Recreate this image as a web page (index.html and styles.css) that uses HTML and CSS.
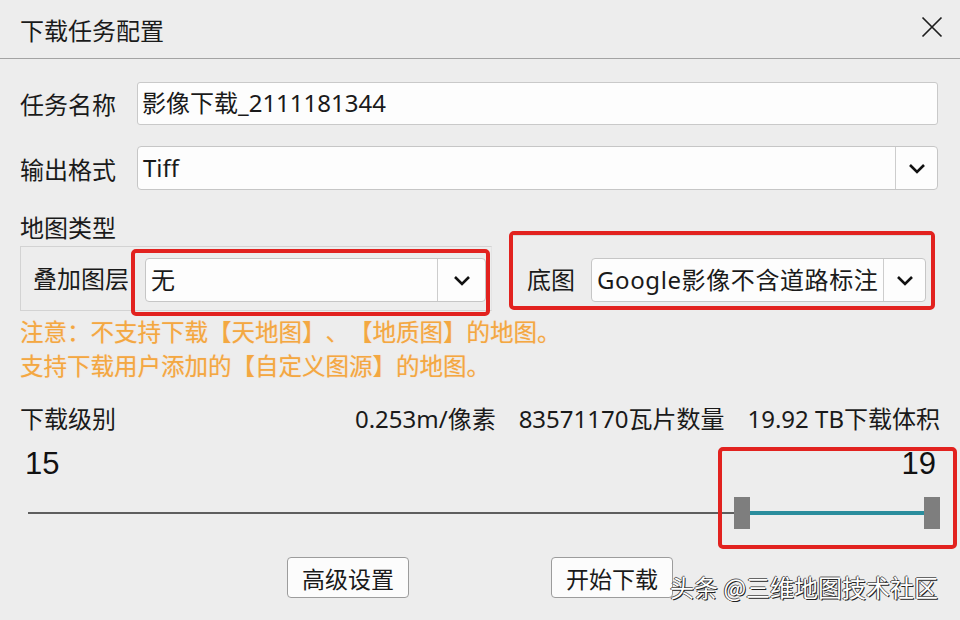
FILE: index.html
```html
<!DOCTYPE html>
<html lang="zh">
<head>
    <meta charset="UTF-8">
    <title>下载任务配置</title>
    <link rel="stylesheet" href="styles.css">
</head>
<body>
<div class="dialog">
    <div class="titlebar">
        <span class="title">下载任务配置</span>
        <svg class="close" width="22" height="22" viewBox="0 0 22 22">
            <path d="M1.5 1.5 L20.5 20.5 M20.5 1.5 L1.5 20.5" stroke="#1e1e1e" stroke-width="1.7" fill="none"/>
        </svg>
    </div>

    <div class="content">
        <div class="field">
            <label class="field-label">任务名称</label>
            <div class="input">影像下载_2111181344</div>
        </div>

        <div class="field field-format">
            <label class="field-label">输出格式</label>
            <div class="combo">
                <span class="combo-text">Tiff</span>
                <span class="combo-btn">
                    <svg width="18" height="11" viewBox="0 0 18 11"><polyline points="2,2 9,9 16,2" fill="none" stroke="#111" stroke-width="2.6"/></svg>
                </span>
            </div>
        </div>

        <div class="section-label">地图类型</div>
        <div class="map-row">
            <div class="group">
                <span class="group-label">叠加图层</span>
                <div class="mark mark-layer">
                    <div class="combo">
                        <span class="combo-text">无</span>
                        <span class="combo-btn">
                            <svg width="18" height="11" viewBox="0 0 18 11"><polyline points="2,2 9,9 16,2" fill="none" stroke="#111" stroke-width="2.6"/></svg>
                        </span>
                    </div>
                </div>
            </div>
            <div class="mark mark-base">
                <div class="group-inner">
                    <span class="group-label base-label">底图</span>
                    <div class="combo">
                        <span class="combo-text">Google影像不含道路标注</span>
                        <span class="combo-btn">
                            <svg width="18" height="11" viewBox="0 0 18 11"><polyline points="2,2 9,9 16,2" fill="none" stroke="#111" stroke-width="2.6"/></svg>
                        </span>
                    </div>
                </div>
            </div>
        </div>

        <div class="notes">
            <p>注意：不支持下载【天地图】、【地质图】的地图。</p>
            <p>支持下载用户添加的【自定义图源】的地图。</p>
        </div>

        <div class="level-head">
            <span>下载级别</span>
            <span class="stats">
                <span>0.253m/像素</span>
                <span>83571170瓦片数量</span>
                <span>19.92 TB下载体积</span>
            </span>
        </div>
        <div class="level-values">
            <span>15</span>
            <span>19</span>
        </div>
        <div class="slider">
            <div class="track"></div>
            <div class="range"></div>
            <div class="handle handle-low"></div>
            <div class="handle handle-high"></div>
        </div>

        <div class="actions">
            <button class="button">高级设置</button>
            <button class="button">开始下载</button>
        </div>
    </div>

    <div class="mark mark-range"></div>
    <div class="watermark">头条 @三维地图技术社区</div>
</div>
</body>
</html>
```

FILE: styles.css
```css
body {
    margin: 0;
    background-color: #ededed;
    color: #1a1a1a;
    font-family: "Noto Sans", "Noto Sans CJK SC", sans-serif;
}
.dialog {
    position: relative;
    width: 960px;
    height: 620px;
    overflow: hidden;
    background-color: #ededed;
}
.titlebar {
    height: 58px;
    border-bottom: 1px solid #a3a3a3;
    display: flex;
    align-items: center;
    justify-content: space-between;
    padding: 0 17px 0 20px;
}
.title {
    font-size: 24px;
}
.close {
    margin-top: -4px;
}

.content {
    padding: 0 22px 0 20px;
}
.field {
    display: flex;
    align-items: center;
    margin-top: 23px;
}
.field-format {
    margin-top: 21px;
}
.field-label {
    width: 117px;
    flex-shrink: 0;
    font-size: 24px;
}
.input {
    flex: 1;
    height: 43px;
    box-sizing: border-box;
    background-color: #fdfdfd;
    border: 1px solid #c9c9c9;
    border-radius: 3px;
    padding-left: 4px;
    font-size: 24px;
    line-height: 40px;
}
.combo {
    flex: 1;
    display: flex;
    height: 44px;
    box-sizing: border-box;
    background-color: #fdfdfd;
    border: 1px solid #c6c6c6;
    border-radius: 4px;
}
.combo-text {
    flex: 1;
    padding-left: 5px;
    font-size: 24px;
    line-height: 41px;
    white-space: nowrap;
    overflow: hidden;
}
.combo-btn {
    width: 41px;
    border-left: 1px solid #cdcdcd;
    display: flex;
    align-items: center;
    justify-content: center;
}

.section-label {
    margin-top: 25px;
    margin-bottom: -10px;
    font-size: 24px;
    line-height: 26px;
}
.map-row {
    display: flex;
    align-items: flex-start;
    height: 80px;
}
.group {
    width: 472px;
    height: 65px;
    margin-top: 15px;
    box-sizing: border-box;
    border: 1px solid #d3d3d3;
    border-right-color: #e4e4e4;
    display: flex;
    align-items: flex-start;
    padding-left: 12px;
}
.group-label {
    width: 98px;
    flex-shrink: 0;
    font-size: 24px;
    line-height: 64px;
}
.mark {
    border: 4px solid #e2221f;
    border-radius: 5px;
    box-sizing: border-box;
}
.mark-layer {
    width: 359px;
    height: 67px;
    margin-top: 2px;
    padding: 5px 0 0 10px;
    display: flex;
    align-items: flex-start;
}
.mark-layer .combo-btn {
    width: 47px;
}
.mark-base {
    width: 426px;
    height: 79px;
    margin-left: 17px;
}
.group-inner {
    height: 100%;
    box-sizing: border-box;
    border-top: 1px solid #d9d9d9;
    padding: 22px 5px 0 14px;
    display: flex;
    align-items: flex-start;
}
.base-label {
    width: 64px;
    line-height: 44px;
}
.mark-base .combo-text {
    letter-spacing: 0.6px;
}

.notes {
    margin-top: 4px;
}
.notes p {
    margin: 0;
    font-size: 23.5px;
    line-height: 34px;
    color: #f3a841;
    text-shadow: 0 0 1px #f7c9a8;
    text-spacing-trim: space-all;
}

.level-head {
    margin-top: 23px;
    display: flex;
    justify-content: space-between;
    font-size: 24px;
    line-height: 26px;
}
.stats {
    display: flex;
    gap: 23px;
    margin-right: -2px;
}
.level-values {
    margin-top: 14px;
    display: flex;
    justify-content: space-between;
    padding: 0 2px 0 5px;
    font-family: "Liberation Sans", Arial, sans-serif;
    font-size: 31px;
    line-height: 36px;
    color: #111;
}
.slider {
    position: relative;
    height: 32px;
    margin: 15px -2px 0 8px;
}
.track {
    position: absolute;
    left: 0;
    right: 0;
    top: 15px;
    height: 2px;
    background-color: #5e5e5e;
}
.range {
    position: absolute;
    left: 714px;
    right: 8px;
    top: 14px;
    height: 4px;
    background-color: #2a8d9d;
}
.handle {
    position: absolute;
    top: 0;
    width: 16px;
    height: 32px;
    background-color: #7e7e7e;
}
.handle-low {
    left: 706px;
}
.handle-high {
    right: 0;
}

.actions {
    margin-top: 28px;
    display: flex;
    gap: 142px;
    padding-left: 267px;
}
.button {
    width: 122px;
    height: 41px;
    background-color: #fcfcfc;
    border: 1px solid #9c9c9c;
    border-radius: 4px;
    font-family: "Noto Sans CJK SC", sans-serif;
    font-size: 23px;
    color: #1a1a1a;
    padding: 0;
}

.mark-range {
    position: absolute;
    left: 718px;
    top: 447px;
    width: 239px;
    height: 102px;
}
.watermark {
    position: absolute;
    left: 670px;
    top: 571px;
    font-family: "Noto Sans CJK SC", sans-serif;
    font-size: 24px;
    line-height: 32px;
    color: #ffffff;
    text-shadow: 1px 1px 0 #222, -1px 0 0 #444, 0 -1px 0 #666;
}
```
